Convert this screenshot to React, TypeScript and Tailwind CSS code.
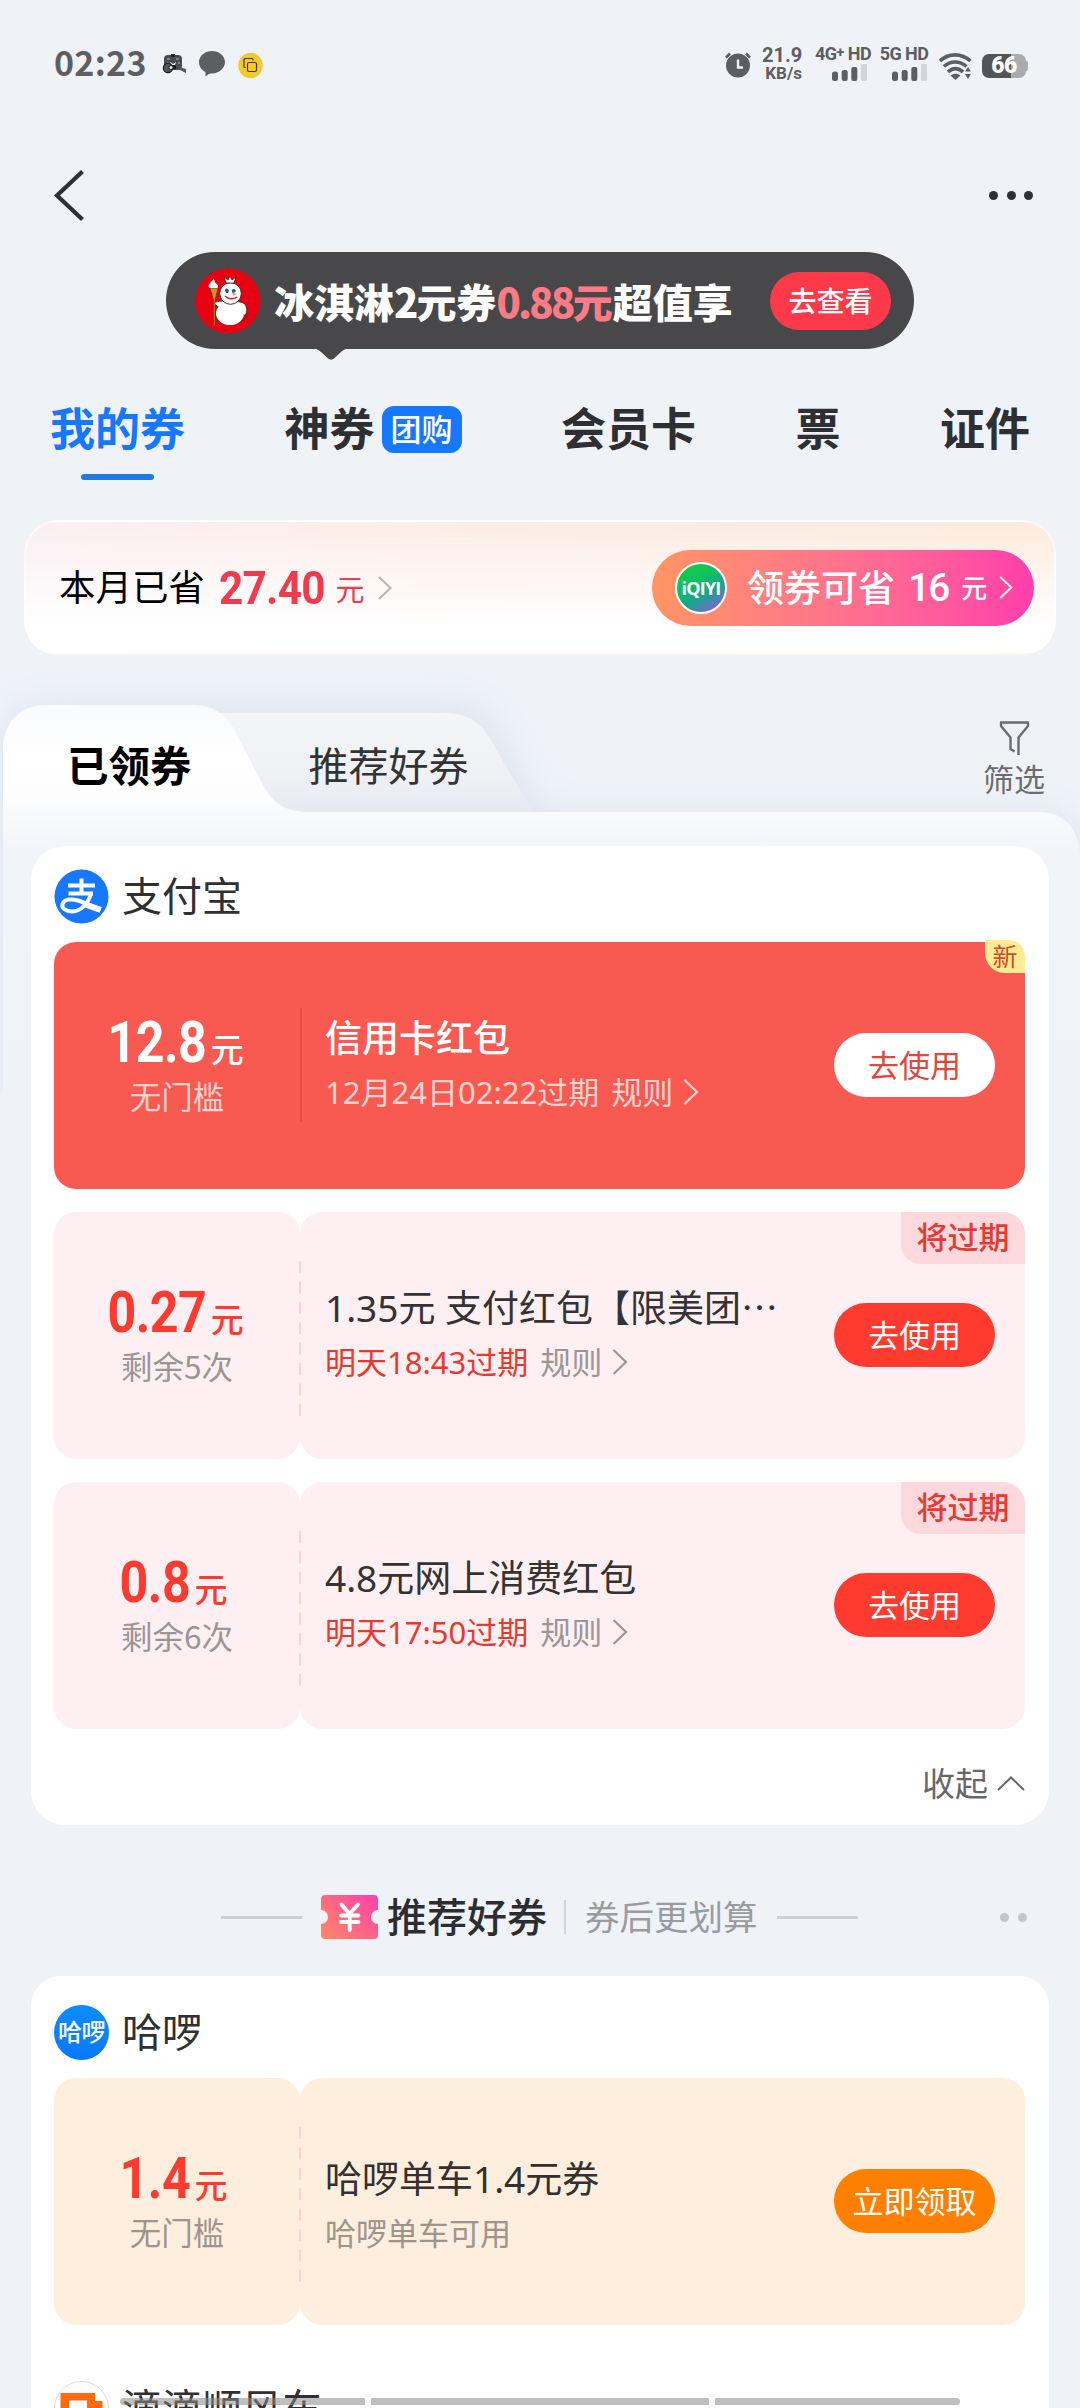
import type { ReactNode } from 'react'

type Coupon = {
  amount: string
  limit: string
  title: string
  time?: string
  note?: string
  action: string
  tag?: string
  tone: 'solid' | 'pink' | 'orange'
}

const wallet: Coupon[] = [
  { amount: '12.8', limit: '无门槛', title: '信用卡红包', time: '12月24日02:22过期', action: '去使用', tag: '新', tone: 'solid' },
  { amount: '0.27', limit: '剩余5次', title: '1.35元 支付红包【限美团⋯', time: '明天18:43过期', action: '去使用', tag: '将过期', tone: 'pink' },
  { amount: '0.8', limit: '剩余6次', title: '4.8元网上消费红包', time: '明天17:50过期', action: '去使用', tag: '将过期', tone: 'pink' },
]

const hello: Coupon = {
  amount: '1.4',
  limit: '无门槛',
  title: '哈啰单车1.4元券',
  note: '哈啰单车可用',
  action: '立即领取',
  tone: 'orange',
}

const tones = {
  solid: {
    left: 'bg-[#f85a52] rounded-l-[22px]',
    right: 'bg-[#f85a52] rounded-r-[22px]',
    amount: 'text-white',
    limit: 'text-[#fdd3d0]',
    title: 'text-white font-medium',
    time: 'text-[#fdd3d0]',
    rule: 'text-[#fdd3d0]',
    button: 'bg-white text-[#e0473d]',
  },
  pink: {
    left: 'bg-[#fef0f2] rounded-[22px]',
    right: 'bg-[#fef0f2] rounded-[22px]',
    amount: 'text-[#fc3b30]',
    limit: 'text-[#9b9596]',
    title: 'text-[#333]',
    time: 'text-[#e8392f]',
    rule: 'text-[#9b9596]',
    button: 'bg-[#ff3b2f] text-white',
  },
  orange: {
    left: 'bg-[#feeedd] rounded-[22px]',
    right: 'bg-[#feeedd] rounded-[22px]',
    amount: 'text-[#fc3b30]',
    limit: 'text-[#9d958d]',
    title: 'text-[#33302d]',
    time: '',
    rule: '',
    button: 'bg-[#ff8000] text-white',
  },
}

function Chevron({ className }: { className: string }) {
  return (
    <svg className={className} viewBox="0 0 14 24" fill="none" stroke="currentColor" strokeWidth="2">
      <path d="M1 1L12.5 12L1 23" />
    </svg>
  )
}

function SignalBars() {
  return (
    <svg className="block h-[17px] w-[36px]" viewBox="0 0 36 17">
      <rect x="0" y="7.5" width="6" height="9.5" rx="2.5" fill="#5d5e61" />
      <rect x="9.7" y="6" width="6" height="11" rx="2.2" fill="#5d5e61" />
      <rect x="19.3" y="3" width="6" height="14" rx="2" fill="#5d5e61" />
      <rect x="29" y="0" width="6" height="17" rx="1" fill="#d3d5da" />
    </svg>
  )
}

function StatusBar() {
  return (
    <div className="flex h-[90px] shrink-0 items-start pl-[54px] pr-[52px] text-[#5d5e61]">
      <div className="mt-[42px] w-[95px] text-[34px] font-bold leading-[40px] tracking-[0.3px]">02:23</div>
      <svg className="ml-[13px] mt-[54px] h-[21px] w-[25px]" viewBox="0 0 25 21">
        <rect x="2" y="1" width="18" height="15" rx="4" fill="#4a4b4e" />
        <path d="M9 0h4v3H9z" fill="#222" />
        <path d="M5 5h3M14 5h3M5 9h2M16 9h2" stroke="#b8babe" strokeWidth="1.2" />
        <path d="M8 8l3 2 3-2-1 3H9z" fill="#e8eaee" />
        <path d="M8 11h6v4H8z" fill="#222" />
        <circle cx="6" cy="14" r="4.6" fill="#55565a" stroke="#1f1f21" strokeWidth="1.3" />
        <circle cx="9" cy="13.5" r="2" fill="#eceef2" stroke="#1f1f21" />
        <path d="M17 13l7 2v4l-8-4z" fill="#55565a" />
      </svg>
      <svg className="ml-[11px] mt-[50px] h-[27px] w-[28px]" viewBox="0 0 28 27">
        <path d="M14 1C21 1 27 5.8 27 12S21 23.5 14 23.5c-1.5 0-3 .2-4 1l-2.5 2v-4.5C3.5 20 1 16.5 1 12 1 5.8 7 1 14 1z" fill="#5d5e61" />
      </svg>
      <svg className="ml-[12px] mt-[52px] h-[27px] w-[25px]" viewBox="0 0 25 27">
        <ellipse cx="12.5" cy="13.5" rx="12.2" ry="12.8" fill="#f3c832" />
        <g fill="none" stroke="#4a3a08" strokeWidth="1.2">
          <rect x="9.5" y="10.5" width="9" height="9" rx="1.5" />
          <path d="M7.5 15.5H7a1 1 0 0 1-1-1V7.5a1 1 0 0 1 1-1h7a1 1 0 0 1 1 1v1" />
        </g>
      </svg>

      <svg className="ml-auto mt-[51px] h-[27px] w-[28px]" viewBox="0 0 28 27">
        <circle cx="14" cy="14.5" r="12" fill="#5d5e61" />
        <path d="M2 6.5l4-4M26 6.5l-4-4" stroke="#5d5e61" strokeWidth="2.6" />
        <path d="M14 8.5v8h5" fill="none" stroke="#eff3f8" strokeWidth="2.4" />
      </svg>
      <div className="ml-[10px] mt-[46px] w-[40px] text-right font-['Roboto'] font-bold">
        <div className="text-[20px] leading-[19px]">21.9</div>
        <div className="text-[17px] leading-[17px]">KB/s</div>
      </div>
      <div className="ml-[12px] mt-[45px] flex w-[58px] flex-col items-center font-['Roboto'] text-[18px] font-bold leading-[17px]">
        <div className="h-[18px] whitespace-nowrap tracking-[-0.6px]">
          4G<span className="relative -top-[3px] text-[15px]">+</span> HD
        </div>
        <div className="ml-[14px] pt-[1px]"><SignalBars /></div>
      </div>
      <div className="ml-[7px] mt-[45px] flex w-[50px] flex-col items-center font-['Roboto'] text-[18px] font-bold leading-[17px]">
        <div className="h-[18px] whitespace-nowrap tracking-[-0.6px]">5G HD</div>
        <div className="ml-[12px] pt-[1px]"><SignalBars /></div>
      </div>
      <svg className="ml-[10px] mt-[52px] h-[28px] w-[34px]" viewBox="0 0 34 28">
        <g fill="none" stroke="#5d5e61" strokeWidth="3.6">
          <path d="M1 9C9.5 .8 22.5 .8 31.5 9" />
          <path d="M5 14.5C11.5 8.5 20.5 8.5 27.5 14.5" />
          <path d="M9 20C13.5 15.5 19.5 15.5 24 20" />
        </g>
        <path d="M11.5 23.5c3-2.5 7-2.5 10 0L16.5 28z" fill="#5d5e61" />
        <path d="M26 19.5l3-4.5 3 4.5zM26 22l3 5 3-5z" fill="#5d5e61" />
      </svg>
      <div className="ml-[9px] mt-[54px] flex items-center">
        <div className="flex h-[24px] w-[44px] items-center justify-center rounded-[7px] bg-linear-to-r from-[#535457] from-67% to-[#aaabad] to-67% font-['Roboto'] text-[23px] font-black leading-[24px] tracking-[-0.5px] text-white">66</div>
        <div className="h-[10px] w-[2px] rounded-r-sm bg-[#aaabad]" />
      </div>
    </div>
  )
}

function TitleBar() {
  return (
    <div className="flex h-[162px] shrink-0 items-start justify-between pl-[53px] pr-[47px] text-[#2f3035]">
      <svg className="mt-[80px] h-[52px] w-[32px]" viewBox="0 0 32 52" fill="none" stroke="currentColor" strokeWidth="4.2">
        <path d="M29.5 1.5L4 25.5L29.5 49.5" />
      </svg>
      <div className="mt-[101px] flex gap-[8.5px]">
        <div className="size-[9px] rounded-full bg-current" />
        <div className="size-[9px] rounded-full bg-current" />
        <div className="size-[9px] rounded-full bg-current" />
      </div>
    </div>
  )
}

function Snowman() {
  return (
    <svg className="size-[66px]" viewBox="0 0 66 66">
      <circle cx="33" cy="33" r="32.5" fill="#e60012" />
      <path d="M19 36c6-4 25-4 31 0l3 13-9 7H24l-6-8z" fill="#a8101a" />
      <path d="M18 35c5-3 27-3 32 1 3 6 2 9-1 12l-3-8H25z" fill="#fff" stroke="#40120e" strokeWidth=".8" />
      <ellipse cx="35" cy="45.5" rx="14" ry="11.5" fill="#fff" />
      <circle cx="35.5" cy="25.5" r="10.8" fill="#fff" stroke="#40120e" strokeWidth=".9" />
      <path d="M31 15l-2-6 4 3 2-4 2 4 4-3-2 6z" fill="#fff" stroke="#40120e" strokeWidth=".8" />
      <path d="M30 22c1-2 3-2 4 1l-1 2h-2zM37 22c2-2 3-1 4 1l-2 2h-2z" fill="#2451b8" />
      <path d="M37 24l5 2-4 2z" fill="#f2b01e" />
      <path d="M30 28c3 3 8 4 12 1" fill="none" stroke="#d4145a" strokeWidth="1.5" />
      <path d="M15 20h8l-3 12v26h-1.5V32z" fill="#d98b28" stroke="#6b3d0a" strokeWidth=".7" />
      <path d="M14.5 20c-2-3 0-4 1-5 0-2 2-2 3-4 2 2 1 3 2 4 3 2 3 3 2 5z" fill="#fff" />
    </svg>
  )
}

function PromoBanner() {
  return (
    <div className="relative ml-[166px] flex h-[97px] w-[748px] shrink-0 items-center rounded-full bg-[#48484a] pl-[29px] pr-[23px]">
      <Snowman />
      <div className="ml-[13px] whitespace-nowrap text-[40px] font-black leading-[50px] text-white">
        冰淇淋<span className="tracking-[-2px]">2</span>元券
        <span className="text-[#fe7a84]"><span className="tracking-[-2.7px]">0.88</span>元</span>超值享
      </div>
      <button className="ml-auto h-[58px] w-[121px] rounded-full bg-[#fe3a4a] pb-[2px] text-[28px] font-medium leading-[54px] text-white">去查看</button>
      <svg className="absolute left-[148px] top-[96px] h-[12px] w-[34px]" viewBox="0 0 34 12">
        <path d="M0 0h34c-3 1-5 2-7 4l-7 6.5c-2 1.5-4 1.5-6 0L7 4C5 2 3 1 0 0z" fill="#48484a" />
      </svg>
    </div>
  )
}

function TopTabs() {
  return (
    <nav className="mt-[48px] flex h-[123px] shrink-0 items-start justify-between pl-[50px] pr-[50px] text-[45px] font-bold leading-[60px] text-[#2e2f32]">
      <div className="flex flex-col items-center text-[#1677ff]">
        我的券
        <div className="mt-[17px] h-[6px] w-[73px] rounded-sm bg-[#1f7ae6]" />
      </div>
      <div className="flex items-start">
        神券
        <span className="ml-[7px] mt-[9px] h-[47px] w-[80px] rounded-[12px] bg-[#1677ff] text-center text-[31px] font-medium leading-[43px] text-white">团购</span>
      </div>
      <div>会员卡</div>
      <div>票</div>
      <div>证件</div>
    </nav>
  )
}

function SavingsCard() {
  return (
    <div className="mx-[24px] flex h-[135px] shrink-0 items-center rounded-[34px] border-2 border-white/50 bg-[linear-gradient(180deg,rgba(255,255,255,0)_5%,#ffffff_80%),linear-gradient(90deg,#faf0f3_0%,#fceee8_35%,#fcecdf_100%)] pl-[33px] pr-[20px]">
      <div className="-mt-[4px] text-[36.5px] leading-[50px] text-black">本月已省</div>
      <div className="ml-[14px] flex h-[60px] items-baseline text-[#f03a4e]">
        <span className="origin-left scale-x-90 font-['Roboto'] text-[47px] font-bold leading-[60px] tracking-[-0.8px]">27.40</span>
        <span className="relative -top-[3px] -ml-[1px] text-[29px] leading-[30px]">元</span>
      </div>
      <Chevron className="ml-[13px] h-[24px] w-[14px] text-[#b9b5b4]" />
      <button className="ml-auto flex h-[76px] w-[382px] items-center rounded-full bg-linear-to-r from-[#ff9564] to-[#ff3dab] pl-[23px] text-white">
        <span className="flex size-[52px] items-center justify-center rounded-full border-2 border-white bg-linear-[150deg] from-[#12c850] from-25% via-[#12a88a] via-60% to-[#a44ce8] font-['Open_Sans'] text-[18px] font-bold leading-none tracking-[-0.8px]">iQIYI</span>
        <span className="-mt-[4px] ml-[20px] text-[37px] font-medium leading-[50px]">领券可省</span>
        <span className="ml-[13px] font-['Roboto'] text-[39px] font-medium leading-[50px] tracking-[-2px]">16</span>
        <span className="-mt-[2px] ml-[13px] text-[26px] font-medium leading-[50px]">元</span>
        <Chevron className="ml-[12px] h-[23px] w-[14px]" />
      </button>
    </div>
  )
}

// folder-shaped backdrop: active tab, inactive tab behind it and the top edge of the panel
function FolderShape() {
  return (
    <svg className="absolute left-0 top-0 h-[440px] w-[1080px]" viewBox="0 0 1080 440">
      <defs>
        <linearGradient id="front" x1="0" y1="50" x2="0" y2="420" gradientUnits="userSpaceOnUse">
          <stop offset="0" stopColor="#f8fafc" />
          <stop offset="0.15" stopColor="#ffffff" />
          <stop offset="0.24" stopColor="#fdfdfe" />
          <stop offset="0.29" stopColor="#f9fafd" />
          <stop offset="0.4" stopColor="#f1f4f9" />
          <stop offset="1" stopColor="#eff3f8" />
        </linearGradient>
        <linearGradient id="back" x1="0" y1="58" x2="0" y2="158" gradientUnits="userSpaceOnUse">
          <stop offset="0" stopColor="#f3f5f8" />
          <stop offset="0.6" stopColor="#eff1f5" />
          <stop offset="1" stopColor="#e6e9f1" />
        </linearGradient>
        <filter id="glow" x="-20%" y="-30%" width="140%" height="160%">
          <feGaussianBlur stdDeviation="17" />
        </filter>
      </defs>
      <path
        d="M3 440V92C3 66 22 50 46 50H460C492 55 498 82 508 100L540 158H1040C1064 158 1080 175 1080 200V440z"
        fill="#dbe1ee"
        opacity="0.9"
        filter="url(#glow)"
      />
      <path d="M200 58H446C472 58 486 72 496 94L528 148L538 160H200z" fill="url(#back)" />
      <path
        d="M3 440V94C3 68 20 50 46 50H192C216 50 230 62 239 84L262 128C272 148 284 157 310 157H1040C1064 157 1078 174 1080 198V440z"
        fill="url(#front)"
      />
    </svg>
  )
}

function FolderTabs() {
  return (
    <div className="relative h-[191px] shrink-0">
      <FolderShape />
      <div className="relative flex pl-[67px] leading-[56px]">
        <div className="mt-[81px] text-[41.5px] font-bold text-black">已领券</div>
        <div className="ml-[117px] mt-[81px] text-[40px] text-[#333]">推荐好券</div>
        <div className="ml-auto mr-[35px] mt-[66px] flex flex-col items-center text-[31px] leading-[40px] text-[#6b6c70]">
          <svg className="ml-[1px] h-[35px] w-[31px]" viewBox="0 0 31 35" fill="none" stroke="currentColor" strokeWidth="2.4" strokeLinejoin="round">
            <path d="M19.5 34V16.5L29 5V1.5H2V5L11.5 16.5V28L15.5 30.5" />
          </svg>
          <div className="mt-[2px]">筛选</div>
        </div>
      </div>
    </div>
  )
}

function Tag({ text, fresh }: { text: string; fresh: boolean }) {
  if (fresh) {
    return (
      <div className="absolute -top-[2px] right-0 h-[33px] w-[40px] rounded-bl-[20px] rounded-tr-[16px] bg-[#ffec93] text-center text-[25px] leading-[31px] text-[#d6482c]">
        {text}
      </div>
    )
  }
  return (
    <div className="absolute right-0 top-0 h-[52px] w-[124px] rounded-bl-[20px] rounded-tr-[22px] bg-[#fdd8dc] text-center text-[31px] font-medium leading-[48px] text-[#e23c33]">
      {text}
    </div>
  )
}

function CouponCard({ coupon }: { coupon: Coupon }) {
  const tone = tones[coupon.tone]
  return (
    <div className="relative flex h-[247px]">
      <div className={`flex w-[246px] flex-col items-center pt-[71px] ${tone.left}`}>
        <div className={`-ml-[16px] flex h-[60px] items-baseline ${tone.amount}`}>
          <span className="origin-right scale-x-[.88] font-['Roboto'] text-[57px] font-bold leading-[60px] tracking-[-0.6px]">{coupon.amount}</span>
          <span className="ml-[4px] text-[33px] font-medium leading-[40px]">元</span>
        </div>
        <div className={`mt-[2px] text-[31.5px] leading-[40px] ${tone.limit}`}>{coupon.limit}</div>
      </div>
      <div className={`flex flex-1 items-start pl-[25px] pr-[30px] ${tone.right}`}>
        <div className={`whitespace-nowrap font-['Noto_Sans','Noto_Sans_CJK_SC',sans-serif] ${coupon.note ? 'mt-[77px]' : 'mt-[72px]'}`}>
          <div className={`text-[37px] leading-[48px] ${tone.title}`}>{coupon.title}</div>
          <div className="mt-[10px] flex items-center text-[31px] leading-[40px]">
            {coupon.note && <span className={tone.limit}>{coupon.note}</span>}
            {coupon.time && (
              <>
                <span className={tone.time}>{coupon.time}</span>
                <span className={`ml-[12px] ${tone.rule}`}>规则</span>
                <Chevron className={`ml-[10px] h-[26px] w-[16px] ${tone.rule}`} />
              </>
            )}
          </div>
        </div>
        <button className={`ml-auto mt-[91px] h-[64px] w-[161px] shrink-0 rounded-full pb-[3px] text-[31px] leading-[61px] ${tone.button}`}>
          {coupon.action}
        </button>
      </div>
      {coupon.tone === 'solid' ? (
        <div className="absolute left-[246px] top-[66px] h-[114px] w-[2px] bg-[#e94a44]" />
      ) : (
        <svg className="absolute left-[245px] top-[49px] h-[155px] w-[2px]" viewBox="0 0 2 155">
          <path d="M1 0V155" stroke="#f8d3d0" strokeWidth="2" strokeDasharray="12 8.4" />
        </svg>
      )}
      {coupon.tag && <Tag text={coupon.tag} fresh={coupon.tone === 'solid'} />}
    </div>
  )
}

function ShopHeader({ logo, name }: { logo: ReactNode; name: string }) {
  return (
    <div className="flex h-[56px] items-center">
      {logo}
      <div className="-mt-[4px] ml-[13px] text-[40px] leading-[52px] text-[#2f3033]">{name}</div>
    </div>
  )
}

function AlipayLogo() {
  return (
    <svg className="size-[55px]" viewBox="0 0 55 55" fill="none">
      <circle cx="27.5" cy="27.5" r="27" fill="#1677ff" />
      <g stroke="#fff">
        <path d="M14 16.5H41M27.5 9.5V24M14.5 24.5H39" strokeWidth="4" />
        <path d="M37 24.5C34 35 26 43 17.5 42.5C11 42 7.5 39 8.5 35C10 30 17 29.5 24 31.5C32 34 40 38 47 40" strokeWidth="4" />
        <path d="M31 35.5L46.5 41" strokeWidth="6" />
      </g>
    </svg>
  )
}

function RecommendHeader() {
  return (
    <div className="mt-[64px] flex h-[56px] shrink-0 items-center">
      <div className="ml-[221px] h-[3px] w-[81px] bg-[#cdd0d4]" />
      <svg className="ml-[18px] h-[44px] w-[59px]" viewBox="0 0 59 44">
        <defs>
          <linearGradient id="ticket" x1="0" y1="1" x2="1" y2="0.2">
            <stop offset="0" stopColor="#ff8a64" />
            <stop offset="1" stopColor="#ff45a5" />
          </linearGradient>
        </defs>
        <path d="M5 0H54q4 0 4 4V15a7 7 0 0 0 0 14V40q0 4-4 4H5q-4 0-4-4V29a7 7 0 0 0 0-14V4q0-4 4-4z" fill="url(#ticket)" />
        <path d="M21.5 9.5L29.5 19L38 9.5M21 20.5H38.5M21 27H38.5M29.7 19V35" fill="none" stroke="#fff" strokeWidth="3.8" strokeLinecap="round" />
      </svg>
      <div className="-mt-[4px] ml-[8px] text-[40px] font-medium leading-[56px] text-[#2c2d30]">推荐好券</div>
      <div className="ml-[17px] h-[34px] w-[2px] bg-[#d3d6da]" />
      <div className="-mt-[4px] ml-[19px] text-[34.5px] leading-[50px] text-[#999b9e]">券后更划算</div>
      <div className="ml-[19px] h-[3px] w-[81px] bg-[#cdd0d4]" />
      <div className="ml-auto mr-[53px] flex gap-[9px]">
        <div className="size-[9px] rounded-full bg-[#c4c6ca]" />
        <div className="size-[9px] rounded-full bg-[#c4c6ca]" />
      </div>
    </div>
  )
}

export default function App() {
  return (
    <div className="relative flex h-[2408px] w-[1080px] flex-col overflow-hidden bg-[#eff3f8] font-['Noto_Sans_CJK_SC',sans-serif]">
      <StatusBar />
      <TitleBar />
      <PromoBanner />
      <TopTabs />
      <SavingsCard />
      <FolderTabs />

      <section className="relative mx-[31px] h-[979px] shrink-0 rounded-[34px] bg-white pl-[23px] pr-[24px] pt-[22px]">
        <ShopHeader logo={<AlipayLogo />} name="支付宝" />
        <div className="mt-[18px] flex flex-col gap-[23px]">
          {wallet.map((c) => (
            <CouponCard key={c.title} coupon={c} />
          ))}
        </div>
        <div className="mt-[31px] flex items-center justify-end text-[33px] leading-[44px] text-[#66676a]">
          收起
          <svg className="ml-[9px] mt-[3px] h-[15px] w-[28px]" viewBox="0 0 28 15" fill="none" stroke="currentColor" strokeWidth="2">
            <path d="M1 14L14 1.5L27 14" />
          </svg>
        </div>
      </section>

      <RecommendHeader />

      <section className="mx-[31px] mt-[31px] h-[500px] shrink-0 rounded-t-[30px] bg-white pl-[23px] pr-[24px] pt-[28px]">
        <ShopHeader
          logo={
            <div className="flex size-[55px] items-center justify-center rounded-full bg-linear-to-b from-[#0d8dff] to-[#0a78f8] pb-[2px] text-[24px] font-medium leading-none tracking-[-0.5px] text-white">
              哈啰
            </div>
          }
          name="哈啰"
        />
        <div className="mt-[18px]">
          <CouponCard coupon={hello} />
        </div>
        <div className="mt-[55px]">
          <ShopHeader
            logo={
              <svg className="size-[55px]" viewBox="0 0 55 55">
                <circle cx="27.5" cy="27.5" r="27" fill="#fff" stroke="#dcdcdc" />
                <path d="M6.5 12H41V20H48.5V44H6.5z" fill="#ff6a0e" />
                <path d="M15 19.5H33V27H41V36H15z" fill="#fff" />
              </svg>
            }
            name="滴滴顺风车"
          />
        </div>
      </section>

      {/* system gesture bar floats above the content */}
      <div className="absolute bottom-[3px] left-[120px] flex h-[7px] gap-[6px]">
        <div className="w-[245px] rounded-l-full bg-[#8a8a8a]/55" />
        <div className="w-[338px] bg-[#8a8a8a]/55" />
        <div className="w-[245px] rounded-r-full bg-[#8a8a8a]/55" />
      </div>
    </div>
  )
}
